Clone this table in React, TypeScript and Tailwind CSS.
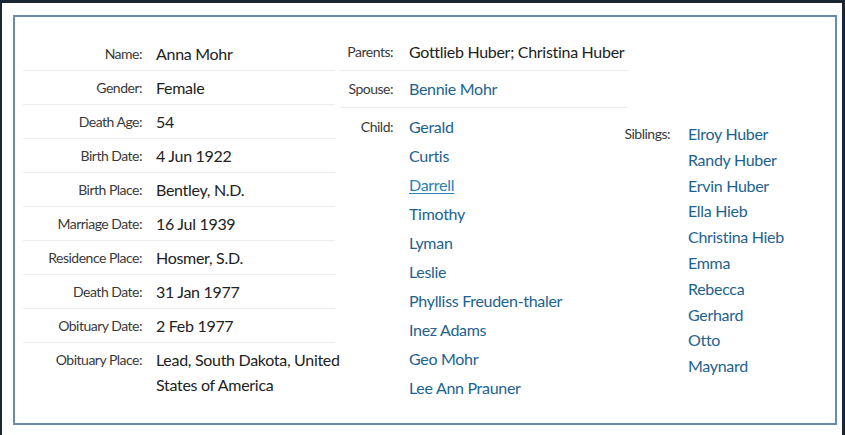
import React from 'react';

interface Fact {
  label: string;
  value: string;
}

const facts: Fact[] = [
  { label: 'Name:', value: 'Anna Mohr' },
  { label: 'Gender:', value: 'Female' },
  { label: 'Death Age:', value: '54' },
  { label: 'Birth Date:', value: '4 Jun 1922' },
  { label: 'Birth Place:', value: 'Bentley, N.D.' },
  { label: 'Marriage Date:', value: '16 Jul 1939' },
  { label: 'Residence Place:', value: 'Hosmer, S.D.' },
  { label: 'Death Date:', value: '31 Jan 1977' },
  { label: 'Obituary Date:', value: '2 Feb 1977' },
  { label: 'Obituary Place:', value: 'Lead, South Dakota, United States of America' },
];

const children = [
  'Gerald',
  'Curtis',
  'Darrell',
  'Timothy',
  'Lyman',
  'Leslie',
  'Phylliss Freuden-thaler',
  'Inez Adams',
  'Geo Mohr',
  'Lee Ann Prauner',
];

const siblings = [
  'Elroy Huber',
  'Randy Huber',
  'Ervin Huber',
  'Ella Hieb',
  'Christina Hieb',
  'Emma',
  'Rebecca',
  'Gerhard',
  'Otto',
  'Maynard',
];

const font = { fontFamily: 'Lato, "Liberation Sans", sans-serif' };

const App: React.FC = () => {
  return (
    <div className="w-[845px] h-[435px] bg-[#1b2633] pt-[3px] pl-[2px] pr-[3px]" style={font}>
      <div className="h-full bg-white pt-[12px] pl-[11px] pr-[3px]">
        <div className="w-[824px] h-[410px] border-2 border-[#6a8cab] flex">
          {/* main facts */}
          <div className="ml-[8px] mt-[20px] w-[312px] shrink-0">
            {facts.map((f, i) => (
              <div
                key={f.label}
                className={`flex py-[4px] ${i < facts.length - 1 ? 'border-b border-[#ececec]' : ''}`}
              >
                <div className="w-[119px] shrink-0 text-right text-[14px] tracking-[-0.5px] leading-[25px] text-[#3a3a3a]">
                  {f.label}
                </div>
                <div className="ml-[14px] w-[186px] shrink-0 text-[16px] tracking-[-0.3px] leading-[25px] text-[#222]">
                  {f.value}
                </div>
              </div>
            ))}
          </div>

          {/* family */}
          <div className="ml-[5px] mt-[17px] w-[288px] shrink-0">
            <div className="flex py-[5px] border-b border-[#ececec]">
              <div className="w-[53px] shrink-0 text-right text-[14px] tracking-[-0.5px] leading-[26px] text-[#3a3a3a]">Parents:</div>
              <div className="ml-[16px] text-[16px] tracking-[-0.3px] leading-[26px] text-[#222] whitespace-nowrap">
                Gottlieb Huber; Christina Huber
              </div>
            </div>
            <div className="flex py-[5px] border-b border-[#ececec]">
              <div className="w-[53px] shrink-0 text-right text-[14px] tracking-[-0.5px] leading-[26px] text-[#3a3a3a]">Spouse:</div>
              <div className="ml-[16px] text-[16px] tracking-[-0.3px] leading-[26px] text-[#1d6290]">Bennie Mohr</div>
            </div>
            <div className="flex pt-[4px]">
              <div className="w-[53px] shrink-0 text-right text-[14px] tracking-[-0.5px] leading-[29px] text-[#3a3a3a]">Child:</div>
              <div className="ml-[16px] flex flex-col">
                {children.map((c) => (
                  <span
                    key={c}
                    className={`text-[16px] tracking-[-0.3px] leading-[29px] ${
                      c === 'Darrell' ? 'text-[#2a80b8] underline underline-offset-2' : 'text-[#1d6290]'
                    }`}
                  >
                    {c}
                  </span>
                ))}
              </div>
            </div>
          </div>

          {/* siblings */}
          <div className="ml-[-15px] mt-[104px] flex">
            <div className="w-[57px] shrink-0 text-right text-[14px] tracking-[-0.5px] leading-[26px] text-[#3a3a3a]">Siblings:</div>
            <div className="ml-[18px] flex flex-col">
              {siblings.map((s) => (
                <span key={s} className="text-[16px] tracking-[-0.3px] leading-[25.8px] text-[#1d6290]">
                  {s}
                </span>
              ))}
            </div>
          </div>
        </div>
      </div>
    </div>
  );
};

export default App;
